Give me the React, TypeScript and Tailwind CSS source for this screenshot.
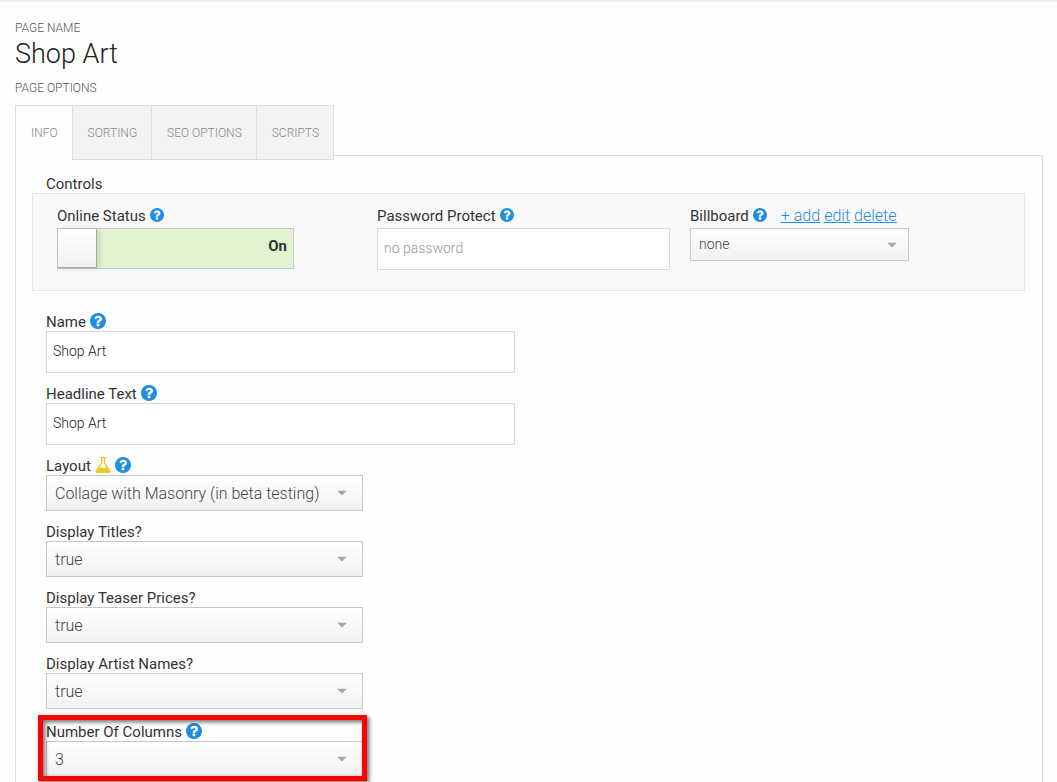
import { useState } from 'react'
import type { ReactNode } from 'react'

const TABS = ['Info', 'Sorting', 'SEO Options', 'Scripts']
const BOOL_OPTIONS = ['true', 'false']

function HelpIcon({ className = 'size-4' }: { className?: string }) {
  return (
    <svg viewBox="128 128 1536 1536" className={`shrink-0 fill-[#1f8ee0] ${className}`} aria-hidden="true">
      <path d="M1024 1376v-192q0-14-9-23t-23-9h-192q-14 0-23 9t-9 23v192q0 14 9 23t23 9h192q14 0 23-9t9-23zm256-672q0-88-55.5-163t-138.5-116-170-41q-243 0-371 213-15 24 8 42l132 100q7 6 19 6 16 0 25-12 53-68 86-92 34-24 86-24 48 0 85.5 26t37.5 59q0 38-20 61t-68 45q-63 28-115.5 86.5t-52.5 125.5v36q0 14 9 23t23 9h192q14 0 23-9t9-23q0-19 21.5-49.5t54.5-49.5q32-18 49-28.5t46-35 44.5-48 28-60.5 12.5-81zm384 192q0 209-103 385.5t-279.5 279.5-385.5 103-385.5-103-279.5-279.5-103-385.5 103-385.5 279.5-279.5 385.5-103 385.5 103 279.5 279.5 103 385.5z" />
    </svg>
  )
}

function FlaskIcon() {
  return (
    <svg viewBox="128 128 1536 1536" className="size-4 shrink-0 fill-[#e8c92b]" aria-hidden="true">
      <path d="M1591 1448q56 89 21.5 152.5t-140.5 63.5h-1152q-106 0-140.5-63.5t21.5-152.5l503-793v-399h-64q-26 0-45-19t-19-45 19-45 45-19h512q26 0 45 19t19 45-19 45-45 19h-64v399zm-779-725l-272 429h712l-272-429-20-31v-436h-128v436z" />
    </svg>
  )
}

interface SelectProps {
  id: string
  options: string[]
  className: string
}

function Select({ id, options, className }: SelectProps) {
  const [value, setValue] = useState(options[0])

  return (
    <div className="relative">
      <select
        id={id}
        value={value}
        onChange={(e) => setValue(e.target.value)}
        className={`peer block w-full appearance-none border border-[#c8c8c8] bg-linear-to-b from-white to-[#f1f1f1] pr-8 pl-2 font-light text-[#444] outline-none ${className}`}
      >
        {options.map((o) => (
          <option key={o}>{o}</option>
        ))}
      </select>
      <svg
        viewBox="0 0 10 5"
        className="pointer-events-none absolute top-1/2 right-4 h-[5px] w-[10px] -translate-y-1/2 fill-[#a6a6a6] peer-[.text-sm]:right-3"
        aria-hidden="true"
      >
        <path d="M0 0h10L5 5z" />
      </svg>
    </div>
  )
}

interface FieldProps {
  id: string
  label: string
  icons?: ReactNode
  className?: string
  children: ReactNode
}

function Field({ id, label, icons, className = '', children }: FieldProps) {
  return (
    <div className={className}>
      <div className="flex h-5 items-center gap-1">
        <label htmlFor={id} className="pt-0.5">
          {label}
        </label>
        {icons}
      </div>
      {children}
    </div>
  )
}

const inputClass =
  'block h-[42px] w-full border border-[#d8d8d8] bg-white px-1.5 pb-0.5 text-sm font-light text-[#222] outline-none placeholder:text-[#999]'
const selectClass = 'h-9 pt-0.5 text-base'

export default function App() {
  const [tab, setTab] = useState('Info')
  const [online, setOnline] = useState(true)
  const [password, setPassword] = useState('')
  const [name, setName] = useState('Shop Art')
  const [headline, setHeadline] = useState('Shop Art')

  return (
    <main className="min-h-screen border-t-2 border-[#eee] bg-[#fefefe] pt-4 pr-3.5 pb-6 pl-[15px] font-[Roboto,sans-serif] text-[15px] leading-5 text-[#333]">
      <p className="text-xs leading-5 font-light text-[#555] uppercase">Page Name</p>
      <h1 className="text-[27px] leading-8 font-light text-[#222]">Shop Art</h1>
      <p className="mt-2 text-xs leading-5 font-light text-[#555] uppercase">Page Options</p>

      <div role="tablist" className="relative z-10 mt-[7px] -mb-[5px] flex">
        {TABS.map((t) => (
          <button
            key={t}
            role="tab"
            aria-selected={tab === t}
            onClick={() => setTab(t)}
            className={`h-[55px] border-t border-l border-[#dfdfdf] pr-3.5 pl-[15px] text-xs font-light text-[#888] uppercase last:border-r ${
              tab === t ? 'bg-[#fefefe]' : 'border-b bg-[#f3f3f3]'
            }`}
          >
            {t}
          </button>
        ))}
      </div>

      <section className="border border-[#dfdfdf] pt-[17px] pr-[17px] pb-6 pl-4">
        <h2 className="h-5 pt-px pl-3.5">Controls</h2>
        <div className="grid grid-cols-[320fr_313fr_314fr] border border-[#e5e5e5] bg-[#f9f9f9] pt-3 pr-5 pb-5 pl-6">
          <div>
            <div className="flex h-[22px] items-start gap-1">
              <label htmlFor="online">Online Status</label>
              <HelpIcon className="mt-0.5 size-3.5" />
            </div>
            <label
              className={`flex h-[41px] w-[237px] cursor-pointer border border-[#c8c8c8] ${
                online ? 'bg-[#e0f4d0]' : 'flex-row-reverse bg-[#eee]'
              }`}
            >
              <input
                id="online"
                type="checkbox"
                checked={online}
                onChange={(e) => setOnline(e.target.checked)}
                className="sr-only"
              />
              <span className="w-[39px] border-r border-b border-[#aaa] bg-linear-to-b from-white to-[#f1f1f1] shadow-[2px_0_5px_rgba(0,0,0,0.15)]" />
              <span className="flex-1 px-1.5 pt-[7px] text-right font-bold">{online ? 'On' : 'Off'}</span>
            </label>
          </div>

          <div className="pr-5">
            <div className="flex h-[22px] items-start gap-1">
              <label htmlFor="password">Password Protect</label>
              <HelpIcon className="mt-0.5 size-3.5" />
            </div>
            <input
              id="password"
              type="text"
              placeholder="no password"
              value={password}
              onChange={(e) => setPassword(e.target.value)}
              className={inputClass}
            />
          </div>

          <div>
            <div className="flex h-[22px] items-start gap-1">
              <label htmlFor="billboard">Billboard</label>
              <HelpIcon className="mt-0.5 size-3.5" />
              <span className="ml-2.5 flex gap-1 text-base leading-5 font-light text-[#1f8ee0] underline">
                <a href="#add">+ add</a>
                <a href="#edit">edit</a>
                <a href="#delete">delete</a>
              </span>
            </div>
            <div className="max-w-[219px]">
              <Select id="billboard" options={['none']} className="h-[33px] pb-0.5 text-sm" />
            </div>
          </div>
        </div>

        <div className="mt-5 flex flex-col gap-2.5 pl-3.5">
          <Field id="name" label="Name" icons={<HelpIcon />} className="max-w-[469px]">
            <input id="name" type="text" value={name} onChange={(e) => setName(e.target.value)} className={inputClass} />
          </Field>
          <Field id="headline" label="Headline Text" icons={<HelpIcon />} className="max-w-[469px]">
            <input
              id="headline"
              type="text"
              value={headline}
              onChange={(e) => setHeadline(e.target.value)}
              className={inputClass}
            />
          </Field>
          <Field
            id="layout"
            label="Layout"
            icons={
              <>
                <FlaskIcon />
                <HelpIcon />
              </>
            }
            className="max-w-[317px]"
          >
            <Select id="layout" options={['Collage with Masonry (in beta testing)']} className={selectClass} />
          </Field>
          <Field id="titles" label="Display Titles?" className="max-w-[317px]">
            <Select id="titles" options={BOOL_OPTIONS} className={selectClass} />
          </Field>
          <Field id="prices" label="Display Teaser Prices?" className="max-w-[317px]">
            <Select id="prices" options={BOOL_OPTIONS} className={selectClass} />
          </Field>
          <Field id="artists" label="Display Artist Names?" className="max-w-[317px]">
            <Select id="artists" options={BOOL_OPTIONS} className={selectClass} />
          </Field>

          {/* highlighted setting */}
          <div className="relative mt-0.5 max-w-[317px]">
            <Field id="columns" label="Number Of Columns" icons={<HelpIcon />}>
              <Select id="columns" options={['3', '2', '4', '5']} className={selectClass} />
            </Field>
            <div className="pointer-events-none absolute -top-1.5 -right-1 -bottom-1 -left-2 border-5 border-[#f00] drop-shadow-[2px_2px_2px_rgba(0,0,0,0.6)]" />
          </div>
        </div>
      </section>
    </main>
  )
}
